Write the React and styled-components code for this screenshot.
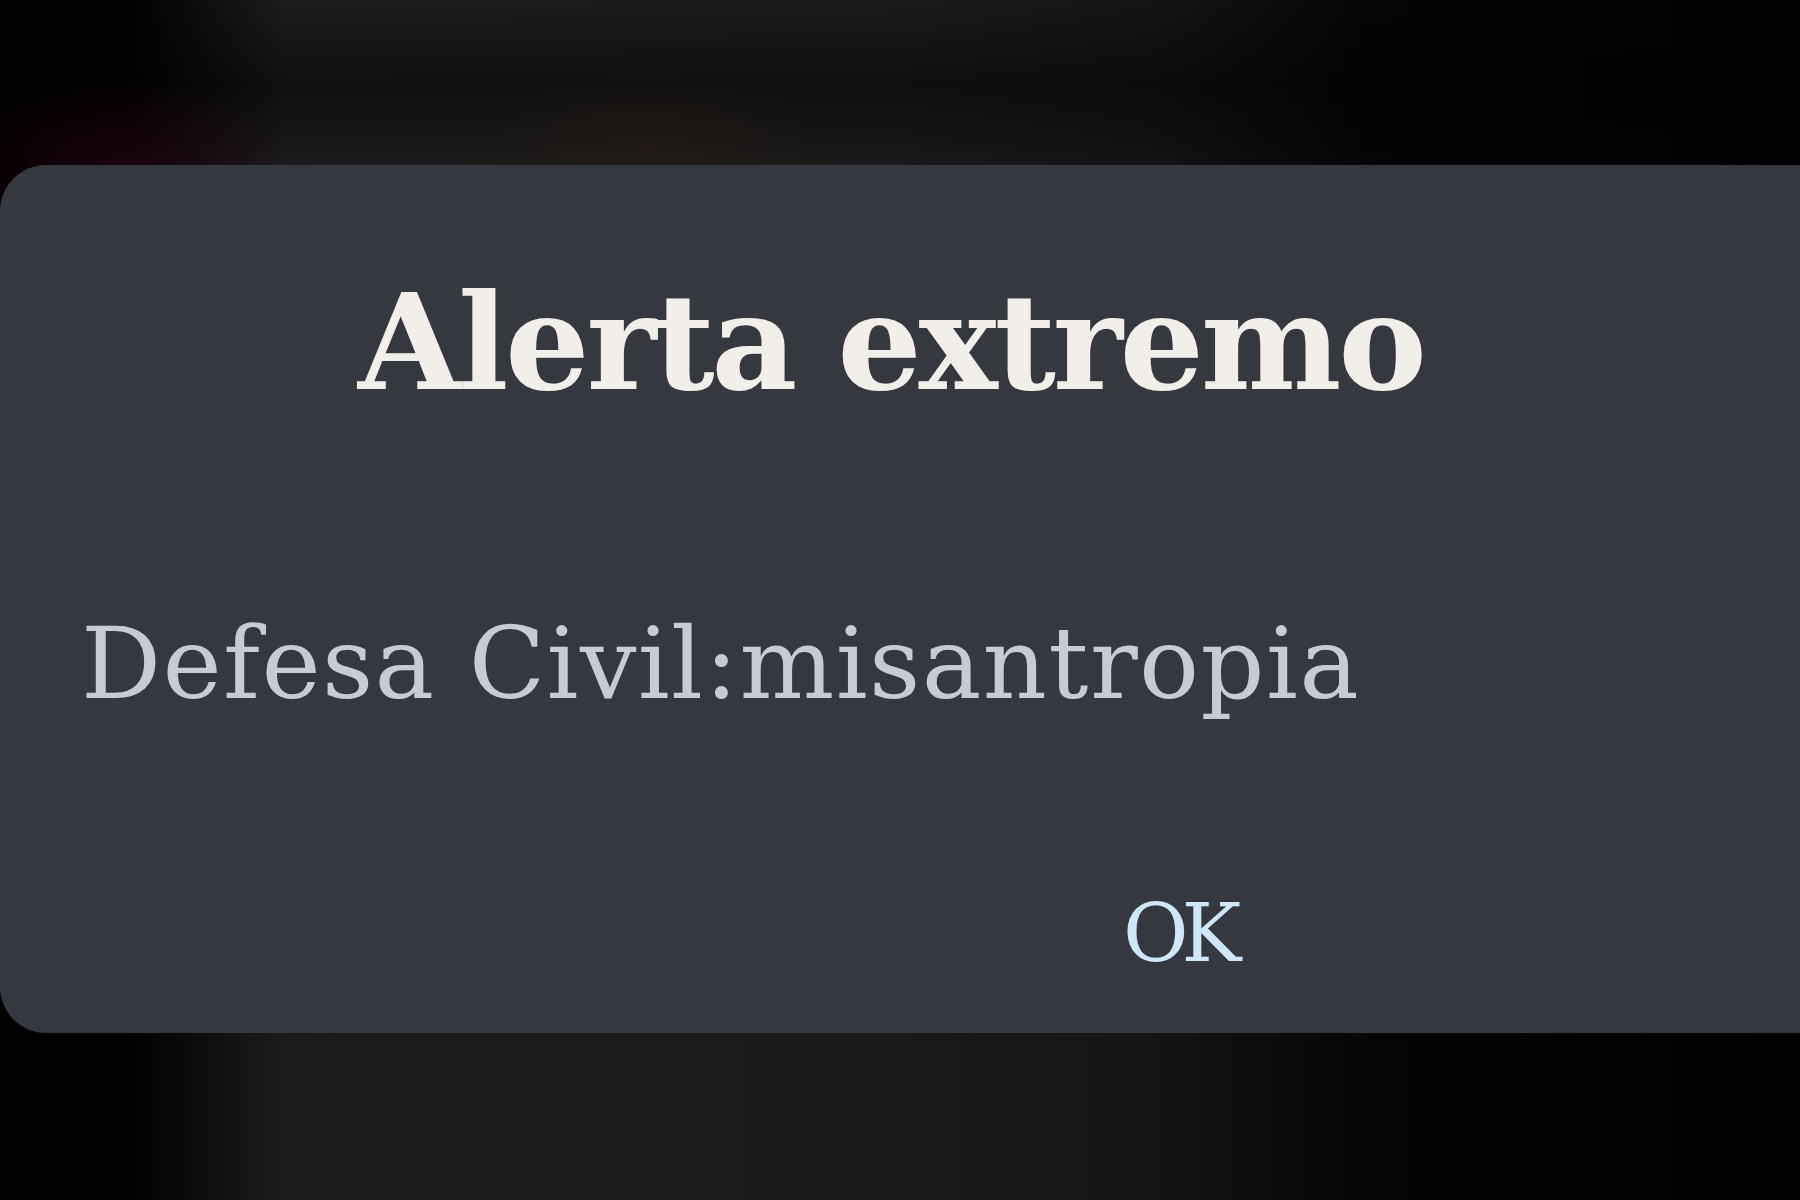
import React from 'react';
import styled, { createGlobalStyle } from 'styled-components';

const GlobalStyle = createGlobalStyle`
  html, body {
    margin: 0;
    padding: 0;
    background: #000;
    overflow: hidden;
  }
`;

const Stage = styled.div`
  width: 1800px;
  height: 1200px;
  padding-top: 165px;
  box-sizing: border-box;
  background:
    radial-gradient(ellipse 260px 120px at 120px 160px, rgba(70, 8, 30, 0.35), transparent 70%),
    radial-gradient(ellipse 260px 120px at 650px 150px, rgba(50, 30, 20, 0.35), transparent 70%),
    linear-gradient(180deg, rgba(0, 0, 0, 0) 0%, rgba(0, 0, 0, 0.45) 7%, rgba(0, 0, 0, 0.2) 12%, rgba(0, 0, 0, 0) 14%),
    linear-gradient(90deg, #000 0%, #000 7%, #1c1c1c 16%, #1a1a1a 50%, #141414 64%, #050505 76%, #000 100%);
`;

const Dialog = styled.div`
  width: 1840px;
  height: 868px;
  box-sizing: border-box;
  background: #363840;
  border-radius: 46px 0 0 46px;
  display: flex;
  flex-direction: column;
  padding: 104px 0 0 0;
  font-family: "DejaVu Serif", "Liberation Serif", serif;
`;

const Title = styled.h1`
  margin: 0;
  padding-left: 358px;
  font-size: 133px;
  font-weight: 700;
  line-height: 1.1;
  letter-spacing: -3.3px;
  color: #f2efea;
  white-space: nowrap;
`;

const Message = styled.p`
  margin: 194px 0 0 0;
  padding-left: 81px;
  font-size: 100px;
  font-weight: 400;
  line-height: 1.1;
  letter-spacing: 1.35px;
  color: #c7cbd3;
  white-space: nowrap;
`;

const Actions = styled.div`
  display: flex;
  margin-top: auto;
  padding: 0 0 53px 1123px;
`;

const OkButton = styled.button`
  background: none;
  border: none;
  padding: 0;
  font-family: inherit;
  font-size: 80px;
  letter-spacing: -7px;
  color: #cfe7fa;
  cursor: pointer;
`;

export default function App() {
  return (
    <>
      <GlobalStyle />
      <Stage>
        <Dialog>
          <Title>Alerta extremo</Title>
          <Message>Defesa Civil:misantropia</Message>
          <Actions>
            <OkButton>OK</OkButton>
          </Actions>
        </Dialog>
      </Stage>
    </>
  );
}
